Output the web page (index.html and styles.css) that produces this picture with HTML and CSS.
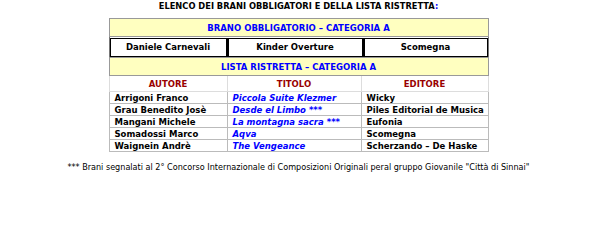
FILE: index.html
```html
<!DOCTYPE html>
<html>
<head>
<meta charset="utf-8">
<link rel="stylesheet" href="styles.css">
</head>
<body>
<div class="page">
  <h1 class="title">ELENCO DEI BRANI OBBLIGATORI E DELLA LISTA RISTRETTA<span class="blue">:</span></h1>
  <table class="main">
    <tr><td colspan="3" class="band">BRANO OBBLIGATORIO – CATEGORIA A</td></tr>
    <tr><td colspan="3" class="boxrow">
      <div class="boxes">
        <div class="box b1">Daniele Carnevali</div>
        <div class="box b2">Kinder Overture</div>
        <div class="box b3">Scomegna</div>
      </div>
    </td></tr>
    <tr><td colspan="3" class="band">LISTA RISTRETTA – CATEGORIA A</td></tr>
    <tr class="head"><th class="c1">AUTORE</th><th class="c2">TITOLO</th><th class="c3">EDITORE</th></tr>
    <tr class="row"><td>Arrigoni Franco</td><td class="it">Piccola Suite Klezmer</td><td>Wicky</td></tr>
    <tr class="row"><td>Grau Benedito Josè</td><td class="it">Desde el Limbo ***</td><td>Piles Editorial de Musica</td></tr>
    <tr class="row"><td>Mangani Michele</td><td class="it">La montagna sacra ***</td><td>Eufonia</td></tr>
    <tr class="row"><td>Somadossi Marco</td><td class="it">Aqva</td><td>Scomegna</td></tr>
    <tr class="row"><td>Waignein Andrè</td><td class="it">The Vengeance</td><td>Scherzando – De Haske</td></tr>
  </table>
  <p class="note">*** Brani segnalati al 2° Concorso Internazionale di Composizioni Originali peral gruppo Giovanile "Città di Sinnai"</p>
</div>
</body>
</html>
```
FILE: styles.css
```css
html, body { margin: 0; padding: 0; background: #fff; }
body { font-family: "DejaVu Sans", Verdana, sans-serif; color: #000; }
.page { width: 597px; display: flex; flex-direction: column; align-items: center; }
.title { font-size: 8.3px; font-weight: bold; margin: 1px 0 0 0; height: 17px; line-height: 10px; }
.blue { color: #0000ff; }
.main { width: 380px; border-collapse: collapse; border: 1px solid #777; font-size: 8.5px; font-weight: bold; }
.main td, .main th { padding: 0; }
.band { background: #ffffc0; color: #0000ff; text-align: center; height: 17px; border: 1px solid #999; line-height: 10px; }
.boxrow { padding: 0; height: 20px; }
.boxes { display: flex; height: 19px; }
.box { border: 1px solid #000; display: flex; align-items: center; justify-content: center; line-height: 10px; }
.b1 { width: 115px; }
.b2 { width: 133px; border-left-width: 2px; }
.b3 { flex: 1; border-left-width: 2px; }
.head th { color: #990000; height: 15px; border: 1px solid #ddd; font-weight: bold; line-height: 10px; }
.c1 { width: 117px; }
.c2 { width: 133px; }
.row td { height: 11px; border: 1px solid #bbb; padding: 0 0 0 5px; line-height: 10px; white-space: nowrap; }
.it { color: #0000ff; font-style: italic; }
.note { font-size: 8.1px; margin: 10px 0 0 0; line-height: 10px; }
```
